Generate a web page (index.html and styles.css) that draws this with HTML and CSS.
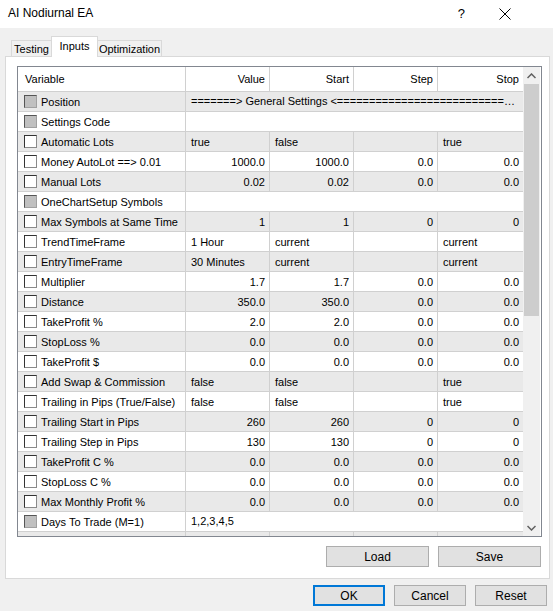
FILE: index.html
```html
<!DOCTYPE html>
<html lang="en">
<head>
    <meta charset="UTF-8">
    <title>AI Nodiurnal EA</title>
    <link rel="stylesheet" href="styles.css">
</head>
<body>
    <div class="dialog">
        <div class="titlebar">
            <span class="title">AI Nodiurnal EA</span>
            <span class="help">?</span>
            <svg class="close" width="12" height="12" viewBox="0 0 12 12"><path d="M0.5 0.5 L11.5 11.5 M11.5 0.5 L0.5 11.5" stroke="#000" stroke-width="1"/></svg>
        </div>

        <div class="tabs">
            <div class="tab testing">Testing</div>
            <div class="tab active">Inputs</div>
            <div class="tab optimization">Optimization</div>
        </div>

        <div class="panel">
            <div class="grid-frame">
                <div class="grid">
                    <div class="row head">
                        <div class="cell">Variable</div>
                        <div class="cell num">Value</div>
                        <div class="cell num">Start</div>
                        <div class="cell num">Step</div>
                        <div class="cell num">Stop</div>
                    </div>
                    <div id="rows"></div>
                </div>
                <div class="scrollbar">
                    <div class="sb-btn"><svg width="9" height="6" viewBox="0 0 9 6"><path d="M0.5 5 L4.5 1 L8.5 5" fill="none" stroke="#606060" stroke-width="1.5"/></svg></div>
                    <div class="sb-thumb"></div>
                    <div class="sb-track"></div>
                    <div class="sb-btn"><svg width="9" height="6" viewBox="0 0 9 6"><path d="M0.5 1 L4.5 5 L8.5 1" fill="none" stroke="#606060" stroke-width="1.5"/></svg></div>
                </div>
            </div>
            <div class="panel-buttons">
                <button class="btn wide">Load</button>
                <button class="btn wide">Save</button>
            </div>
        </div>

        <div class="dialog-buttons">
            <button class="btn default">OK</button>
            <button class="btn">Cancel</button>
            <button class="btn">Reset</button>
        </div>
    </div>

    <script>
        // name, disabled checkbox, values (a string = spans all four columns)
        const inputs = [
            ['Position', true, '=======> General Settings <=================================================='],
            ['Settings Code', true, ''],
            ['Automatic Lots', false, ['true', 'false', '', 'true'], 'text'],
            ['Money AutoLot ==> 0.01', false, ['1000.0', '1000.0', '0.0', '0.0']],
            ['Manual Lots', false, ['0.02', '0.02', '0.0', '0.0']],
            ['OneChartSetup Symbols', true, ''],
            ['Max Symbols at Same Time', false, ['1', '1', '0', '0']],
            ['TrendTimeFrame', false, ['1 Hour', 'current', '', 'current'], 'text'],
            ['EntryTimeFrame', false, ['30 Minutes', 'current', '', 'current'], 'text'],
            ['Multiplier', false, ['1.7', '1.7', '0.0', '0.0']],
            ['Distance', false, ['350.0', '350.0', '0.0', '0.0']],
            ['TakeProfit %', false, ['2.0', '2.0', '0.0', '0.0']],
            ['StopLoss %', false, ['0.0', '0.0', '0.0', '0.0']],
            ['TakeProfit $', false, ['0.0', '0.0', '0.0', '0.0']],
            ['Add Swap & Commission', false, ['false', 'false', '', 'true'], 'text'],
            ['Trailing in Pips (True/False)', false, ['false', 'false', '', 'true'], 'text'],
            ['Trailing Start in Pips', false, ['260', '260', '0', '0']],
            ['Trailing Step in Pips', false, ['130', '130', '0', '0']],
            ['TakeProfit C %', false, ['0.0', '0.0', '0.0', '0.0']],
            ['StopLoss C %', false, ['0.0', '0.0', '0.0', '0.0']],
            ['Max Monthly Profit %', false, ['0.0', '0.0', '0.0', '0.0']],
            ['Days To Trade (M=1)', true, '1,2,3,4,5'],
            ['', false, ['', '', '', '']]
        ];

        const rowsEl = document.getElementById('rows');

        inputs.forEach(([name, disabled, values, kind], i) => {
            const row = document.createElement('div');
            row.className = 'row' + (i % 2 === 0 ? ' shaded' : '');

            const nameCell = document.createElement('div');
            nameCell.className = 'cell name';
            if (name) {
                const box = document.createElement('span');
                box.className = 'check' + (disabled ? ' disabled' : '');
                nameCell.appendChild(box);
                nameCell.appendChild(document.createTextNode(name));
            }
            row.appendChild(nameCell);

            if (typeof values === 'string') {
                const cell = document.createElement('div');
                cell.className = 'cell span';
                cell.textContent = values;
                row.appendChild(cell);
            } else {
                values.forEach(v => {
                    const cell = document.createElement('div');
                    cell.className = 'cell' + (kind === 'text' ? '' : ' num');
                    cell.textContent = v;
                    row.appendChild(cell);
                });
            }

            rowsEl.appendChild(row);
        });
    </script>
</body>
</html>
```

FILE: styles.css
```css
body {
    margin: 0;
    background-color: #f0f0f0;
    font-family: 'Liberation Sans', Arial, sans-serif;
    font-size: 11px;
    color: #000;
}

.dialog {
    width: 553px;
    height: 611px;
    display: flex;
    flex-direction: column;
    overflow: hidden;
}

.titlebar {
    height: 28px;
    background-color: #fff;
    display: flex;
    align-items: center;
    padding-left: 8px;
    font-size: 12px;
}

.title {
    flex: 1;
    padding-bottom: 2px;
}

.help {
    font-size: 13px;
    margin-right: 34px;
    padding-bottom: 2px;
}

.close {
    margin-right: 42px;
}

.tabs {
    display: flex;
    align-items: flex-end;
    height: 28px;
    padding-left: 11px;
    box-sizing: border-box;
}

.tab {
    height: 17px;
    line-height: 17px;
    box-sizing: border-box;
    text-align: center;
    border: 1px solid #d9d9d9;
    border-bottom: none;
    margin-bottom: -1px;
    white-space: nowrap;
}

.tab.testing {
    width: 41px;
}

.tab.optimization {
    width: 65px;
}

.tab.active {
    width: 47px;
    height: 21px;
    line-height: 19px;
    background-color: #fff;
    margin: 0 -1px -1px;
    position: relative;
    z-index: 1;
}

.panel {
    margin-left: 5px;
    width: 545px;
    height: 523px;
    box-sizing: border-box;
    background-color: #fff;
    border: 1px solid #d9d9d9;
    padding: 9px 7px 0 11px;
    display: flex;
    flex-direction: column;
}

.grid-frame {
    height: 471px;
    box-sizing: border-box;
    border: 1px solid #828790;
    display: flex;
    overflow: hidden;
}

.grid {
    width: 505px;
    overflow: hidden;
}

.row {
    display: grid;
    grid-template-columns: 168px 84px 84px 84px 85px;
    height: 20px;
    box-sizing: border-box;
    border-bottom: 1px solid #d0d0d0;
    background-color: #fff;
}

.row.shaded {
    background-color: #e9e9e9;
}

.row.head {
    height: 25px;
    background-color: #fff;
}

.cell {
    border-right: 1px solid #d0d0d0;
    padding: 0 4px 0 5px;
    display: flex;
    align-items: center;
    white-space: nowrap;
    overflow: hidden;
}

.row.head .cell:first-child {
    padding-left: 7px;
}

.cell:last-child {
    border-right: none;
}

.cell.num {
    justify-content: flex-end;
}

.cell.span {
    grid-column: 2 / 6;
    border-right: none;
    display: block;
    line-height: 19px;
    text-overflow: ellipsis;
    padding-right: 8px;
}

.cell.name {
    padding-left: 6px;
}

.check {
    width: 11px;
    height: 11px;
    border: 1px solid #333;
    border-right-color: #8a8a8a;
    border-bottom-color: #8a8a8a;
    background-color: #fff;
    margin-right: 4px;
    flex-shrink: 0;
}

.check.disabled {
    background-color: #c0c0c0;
    border-color: #555 #a0a0a0 #a0a0a0 #555;
}

.scrollbar {
    width: 17px;
    display: flex;
    flex-direction: column;
    background-color: #f0f0f0;
}

.sb-btn {
    height: 17px;
    display: flex;
    align-items: center;
    justify-content: center;
    flex-shrink: 0;
}

.sb-thumb {
    height: 232px;
    margin: 0 1px;
    background-color: #cdcdcd;
}

.sb-track {
    flex: 1;
}

.panel-buttons {
    display: flex;
    justify-content: flex-end;
    gap: 9px;
    margin-top: 9px;
    padding-right: 1px;
}

.btn {
    width: 72px;
    height: 21px;
    box-sizing: border-box;
    background-color: #e1e1e1;
    border: 1px solid #adadad;
    font-family: 'Liberation Sans', Arial, sans-serif;
    font-size: 12px;
    color: #000;
    padding: 0;
}

.btn.wide {
    width: 103px;
}

.btn.default {
    border: 2px solid #0078d7;
}

.dialog-buttons {
    display: flex;
    justify-content: flex-end;
    gap: 9px;
    margin-top: 6px;
    padding-right: 6px;
}
```
